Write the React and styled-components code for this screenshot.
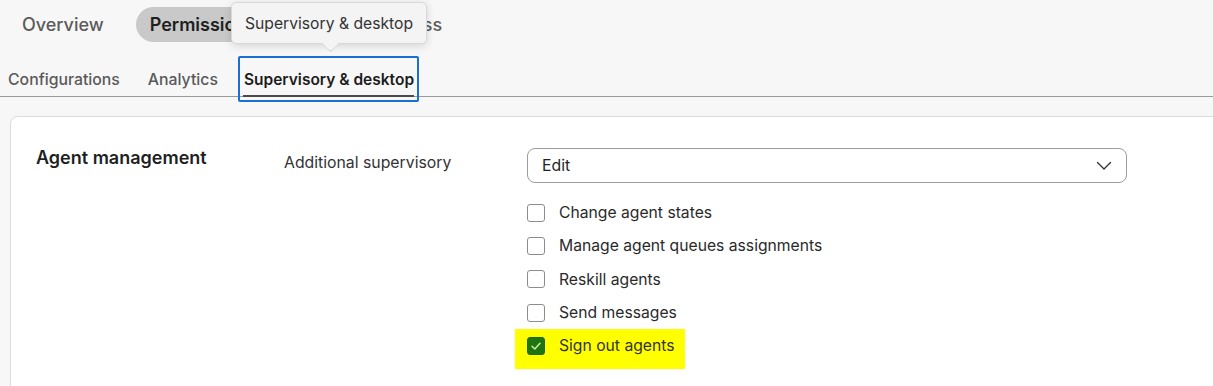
import React from "react"
import styled, { createGlobalStyle } from "styled-components"

const GlobalStyle = createGlobalStyle`
  body {
    margin: 0;
    background: #f7f7f7;
    font-family: Inter, "Noto Sans", sans-serif;
    overflow: hidden;
  }
`

const checks = [
  { label: "Change agent states", checked: false },
  { label: "Manage agent queues assignments", checked: false },
  { label: "Reskill agents", checked: false },
  { label: "Send messages", checked: false },
  { label: "Sign out agents", checked: true, marked: true },
]

const App = () => {
  return (
    <Page>
      <GlobalStyle />
      <TopTabs>
        <TopTab>Overview</TopTab>
        <TopTab active>Permissions</TopTab>
        <TopTab>Feature access</TopTab>
        <Tooltip>Supervisory &amp; desktop</Tooltip>
      </TopTabs>
      <SubTabs>
        <SubTab>Configurations</SubTab>
        <SubTab>Analytics</SubTab>
        <SubTab active>Supervisory &amp; desktop</SubTab>
      </SubTabs>
      <Card>
        <SectionTitle>Agent management</SectionTitle>
        <FieldLabel>Additional supervisory</FieldLabel>
        <Controls>
          <Select>
            <span>Edit</span>
            <svg width="16" height="10" viewBox="0 0 16 10">
              <polyline
                points="1.5,1.5 8,8 14.5,1.5"
                fill="none"
                stroke="#333"
                strokeWidth="1.4"
                strokeLinecap="round"
                strokeLinejoin="round"
              />
            </svg>
          </Select>
          <CheckList>
            {checks.map(item => (
              <CheckRow key={item.label} $marked={item.marked}>
                <Box $checked={item.checked}>
                  {item.checked && (
                    <svg width="12" height="10" viewBox="0 0 12 10">
                      <polyline
                        points="2,5.2 4.8,8 10,2.2"
                        fill="none"
                        stroke="#c9ec9b"
                        strokeWidth="1.5"
                        strokeLinecap="round"
                        strokeLinejoin="round"
                      />
                    </svg>
                  )}
                </Box>
                {item.label}
              </CheckRow>
            ))}
          </CheckList>
        </Controls>
      </Card>
    </Page>
  )
}

export default App

const Page = styled.div`
  width: 1213px;
  height: 386px;
  overflow: hidden;
`

const TopTabs = styled.div`
  position: relative;
  display: flex;
  align-items: center;
  gap: 18px;
  height: 50px;
  padding: 0 0 0 8px;
  box-sizing: border-box;
`

const TopTab = styled.div`
  height: 35px;
  display: flex;
  align-items: center;
  padding: 0 ${p => (p.active ? "23px" : "14px")} 0 14px;
  border-radius: 18px;
  font-size: 18px;
  white-space: nowrap;
  color: ${p => (p.active ? "#1f1f1f" : "#5b5b5b")};
  font-weight: ${p => (p.active ? 600 : 500)};
  background: ${p => (p.active ? "#c9c9c9" : "transparent")};
  margin-top: -1px;
`

const Tooltip = styled.div`
  position: absolute;
  left: 231px;
  top: 2px;
  width: 196px;
  height: 42px;
  box-sizing: border-box;
  display: flex;
  align-items: center;
  justify-content: center;
  background: #f4f4f4;
  border: 1px solid #d8d8d8;
  border-radius: 5px;
  box-shadow: 0 2px 8px rgba(0, 0, 0, 0.14);
  font-size: 15.7px;
  color: #333;

  &::after {
    content: "";
    position: absolute;
    left: 92px;
    bottom: -7px;
    width: 12px;
    height: 12px;
    background: #f4f4f4;
    border-right: 1px solid #d8d8d8;
    border-bottom: 1px solid #d8d8d8;
    transform: rotate(45deg);
    border-bottom-right-radius: 3px;
  }
`

const SubTabs = styled.div`
  display: flex;
  align-items: stretch;
  height: 47px;
  padding: 6px 0 0 8px;
  border-bottom: 1px solid #9a9a9a;
  box-sizing: border-box;
`

const SubTab = styled.div`
  position: relative;
  display: flex;
  align-items: center;
  padding-top: 6px;
  margin-right: 28px;
  font-size: 15.8px;
  font-weight: 500;
  color: #5a5a5a;
  box-sizing: border-box;
  ${p =>
    p.active &&
    `
    margin: 0 0 -6px -8px;
    padding: 4px 3px 3px 4px;
    font-size: 15.5px;
    font-weight: 600;
    color: #1c1c1c;
    border: 2px solid #1a6fd1;
    border-radius: 2px;
    &::after {
      content: "";
      position: absolute;
      left: 3px;
      right: 3px;
      bottom: 3px;
      height: 2px;
      background: #4a4a4a;
    }
  `}
`

const Card = styled.div`
  margin: 19px -20px 0 10px;
  height: 290px;
  box-sizing: border-box;
  background: #fff;
  border: 1px solid #dcdcdc;
  border-radius: 8px;
  padding: 31px 0 0 25px;
  display: grid;
  grid-template-columns: 248px 243px 600px;
  align-items: start;
`

const SectionTitle = styled.div`
  font-size: 18px;
  font-weight: 600;
  color: #1f1f1f;
  line-height: 20px;
`

const FieldLabel = styled.div`
  font-size: 15.8px;
  color: #333;
  line-height: 20px;
  padding-top: 5px;
`

const Controls = styled.div`
  display: flex;
  flex-direction: column;
`

const Select = styled.div`
  height: 35px;
  box-sizing: border-box;
  border: 1.5px solid #9c9c9c;
  border-radius: 8px;
  display: flex;
  align-items: center;
  justify-content: space-between;
  padding: 0 14px 0 14px;
  font-size: 15.8px;
  color: #1f1f1f;
`

const CheckList = styled.div`
  display: flex;
  flex-direction: column;
  margin-top: 13px;
`

const CheckRow = styled.div`
  display: flex;
  align-items: center;
  gap: 14px;
  height: 33.3px;
  font-size: 15.7px;
  color: #2a2a2a;
  ${p =>
    p.$marked &&
    `
    background: #ffff00;
    align-self: flex-start;
    margin-left: -12px;
    padding: 0 10px 7px 12px;
    color: #333;
  `}
`

const Box = styled.span`
  width: 18px;
  height: 18px;
  box-sizing: border-box;
  border-radius: 3px;
  border: 1.5px solid ${p => (p.$checked ? "#1c6d12" : "#8c8c8c")};
  background: ${p => (p.$checked ? "#1f7412" : "#fff")};
  display: flex;
  align-items: center;
  justify-content: center;
  flex: none;
`
